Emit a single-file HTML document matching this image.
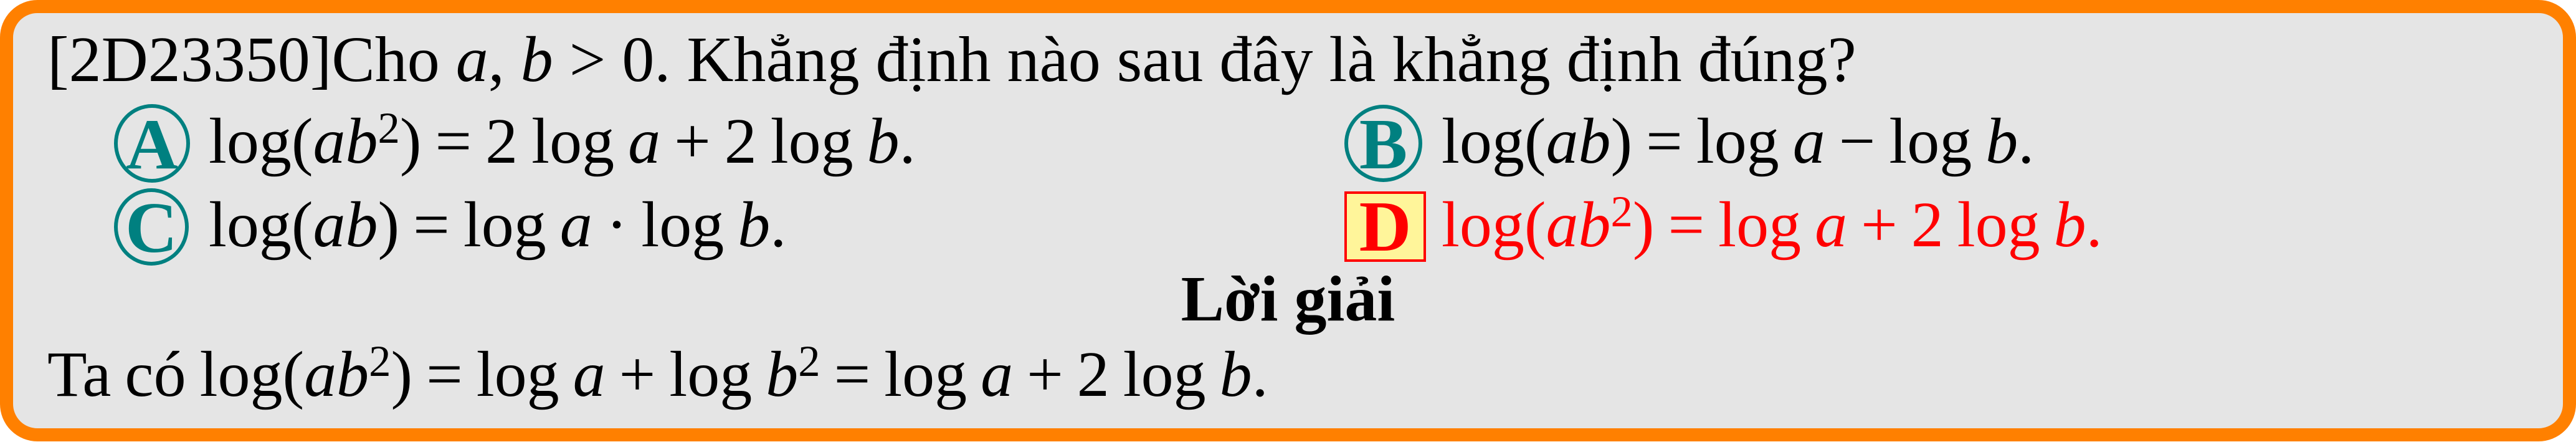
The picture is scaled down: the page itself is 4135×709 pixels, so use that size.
<!DOCTYPE html>
<html><head><meta charset="utf-8"><style>
html,body{margin:0;padding:0;background:#fff;}
body{width:4135px;height:709px;position:relative;overflow:hidden;font-family:"Liberation Serif",serif;font-size:104px;color:#000;}
.box{position:absolute;left:0;top:0;width:4093px;height:666px;border:21px solid #ff8000;border-radius:60px;background:#e5e5e5;}
.l{position:absolute;white-space:nowrap;line-height:1;}
i{font-style:italic;font-family:"Liberation Serif",serif;}
sup{font-size:0.68em;vertical-align:0;position:relative;top:-0.45em;}
.circ{position:absolute;border:6px solid #008080;border-radius:50%;box-sizing:border-box;color:#008080;font-weight:bold;text-align:center;font-size:116px;}
.sq{position:absolute;border:4px solid #f00;background:#fff59a;color:#f00;font-weight:bold;text-align:center;box-sizing:border-box;font-size:116px;}
.m{word-spacing:-4px;}
</style></head><body>
<div class="box"></div>
<div class="l" style="left:76px;top:44px;">[2D23350]Cho <i>a</i>, <i>b</i> &gt; 0. Khẳng định nào sau đây là khẳng định đúng?</div>

<div class="circ" style="left:183px;top:167px;width:122px;height:126px;line-height:118px;">A</div>
<div class="l m" style="left:335px;top:175px;">log(<i>ab</i><sup>2</sup>) = 2 log <i>a</i> + 2 log <i>b</i>.</div>

<div class="circ" style="left:2158px;top:168px;width:125px;height:124px;line-height:116px;">B</div>
<div class="l m" style="left:2314px;top:175px;">log(<i>ab</i>) = log <i>a</i> − log <i>b</i>.</div>

<div class="circ" style="left:183px;top:302px;width:120px;height:124px;line-height:116px;">C</div>
<div class="l m" style="left:335px;top:309px;">log(<i>ab</i>) = log <i>a</i> · log <i>b</i>.</div>

<div class="sq" style="left:2158px;top:307px;width:131px;height:113px;line-height:106px;">D</div>
<div class="l m" style="left:2314px;top:309px;color:#f00;">log(<i>ab</i><sup>2</sup>) = log <i>a</i> + 2 log <i>b</i>.</div>

<div class="l" style="left:0;width:4135px;text-align:center;top:428px;font-weight:bold;">Lời giải</div>

<div class="l m" style="left:76px;top:549px;">Ta có log(<i>ab</i><sup>2</sup>) = log <i>a</i> + log <i>b</i><sup>2</sup> = log <i>a</i> + 2 log <i>b</i>.</div>
</body></html>
